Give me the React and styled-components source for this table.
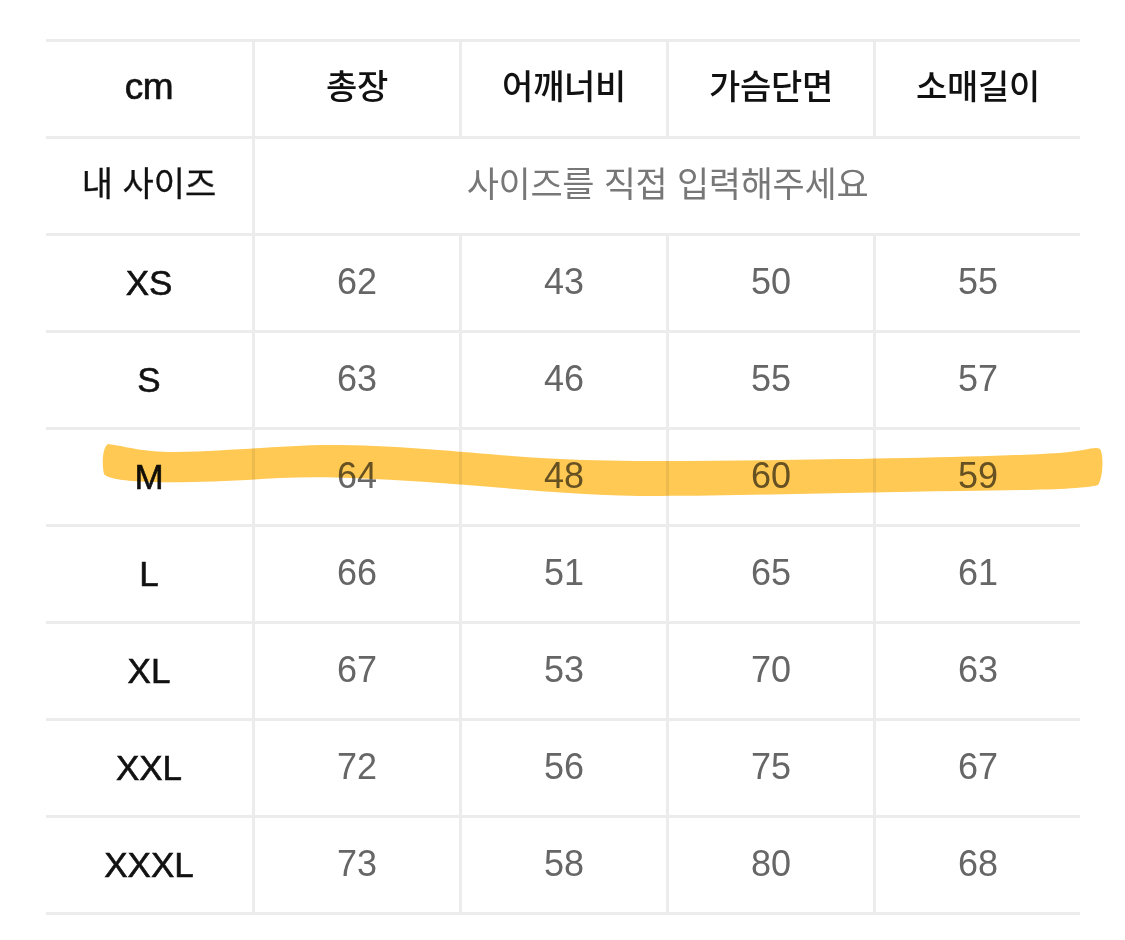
import React from "react";
import styled, { createGlobalStyle } from "styled-components";

const GlobalStyle = createGlobalStyle`
  html, body {
    margin: 0;
    padding: 0;
    background: #ffffff;
  }
  body {
    font-family: "Liberation Sans", "Noto Sans CJK KR", sans-serif;
  }
`;

const Page = styled.div`
  position: relative;
  width: 1125px;
  height: 940px;
  padding: 39px 0 0 46px;
  box-sizing: border-box;
  overflow: hidden;
`;

const Table = styled.div`
  display: grid;
  grid-template-columns: 206px repeat(4, 207px);
  width: 1034px;
  border-top: 3px solid #ececec;
`;

const Cell = styled.div`
  height: 94px;
  display: flex;
  align-items: center;
  justify-content: center;
  border-bottom: 3px solid #ececec;
  border-left: ${(p) => (p.$first ? "none" : "3px solid #ececec")};
  grid-column: ${(p) => p.$span || "auto"};
  font-family: "Liberation Sans", "Noto Sans CJK KR", sans-serif;
`;

const HeadText = styled.span`
  font-size: ${(p) => (p.$latin ? "37px" : "34px")};
  font-weight: ${(p) => (p.$latin ? 400 : 500)};
  -webkit-text-stroke: ${(p) => (p.$latin ? "0.7px #111" : "0")};
  color: #111;
  letter-spacing: -0.3px;
  margin-bottom: ${(p) => (p.$latin ? "4px" : "10px")};
`;

const LabelText = styled.span`
  font-size: ${(p) => (p.$korean ? "34px" : "35px")};
  color: #111;
  font-weight: 400;
  -webkit-text-stroke: ${(p) => (p.$korean ? "0.3px #111" : "0.6px #111")};
  margin-bottom: ${(p) => (p.$korean ? "10px" : "0")};
`;

const ValueText = styled.span`
  font-size: 36px;
  color: #666;
  margin-bottom: 2px;
`;

const Placeholder = styled.span`
  font-size: 35px;
  color: #777;
  letter-spacing: -0.3px;
  margin-bottom: 10px;
`;

const Highlight = styled.svg`
  position: absolute;
  left: 0;
  top: 0;
  pointer-events: none;
  mix-blend-mode: multiply;
`;

const headers = ["총장", "어깨너비", "가슴단면", "소매길이"];

const rows = [
  ["XS", 62, 43, 50, 55],
  ["S", 63, 46, 55, 57],
  ["M", 64, 48, 60, 59],
  ["L", 66, 51, 65, 61],
  ["XL", 67, 53, 70, 63],
  ["XXL", 72, 56, 75, 67],
  ["XXXL", 73, 58, 80, 68],
];

const MarkerStroke = () => (
  <Highlight width="1125" height="940" viewBox="0 0 1125 940">
    <path
      d="M 108 444
         C 125 446, 140 452, 175 452
         C 240 451, 290 444, 340 445
         C 420 446, 480 455, 560 459
         C 620 462, 700 461, 780 460
         C 880 459, 990 457, 1060 453
         C 1085 451, 1095 446, 1100 449
         C 1104 455, 1103 478, 1098 485
         C 1080 490, 1020 490, 960 491
         C 860 492, 740 496, 660 496
         C 580 496, 510 488, 440 483
         C 380 479, 330 476, 280 478
         C 230 481, 190 483, 150 482
         C 125 481, 108 479, 104 474
         C 102 465, 102 448, 108 444 Z"
      fill="#ffc23c"
      opacity="0.88"
      style={{ filter: "blur(0.7px)" }}
    />
  </Highlight>
);

export default function App() {
  return (
    <>
      <GlobalStyle />
      <Page>
        <Table>
          <Cell $first>
            <HeadText $latin>cm</HeadText>
          </Cell>
          {headers.map((h) => (
            <Cell key={h}>
              <HeadText>{h}</HeadText>
            </Cell>
          ))}

          <Cell $first>
            <LabelText $korean>내 사이즈</LabelText>
          </Cell>
          <Cell $span="2 / span 4">
            <Placeholder>사이즈를 직접 입력해주세요</Placeholder>
          </Cell>

          {rows.map(([size, ...vals]) => (
            <React.Fragment key={size}>
              <Cell $first>
                <LabelText>{size}</LabelText>
              </Cell>
              {vals.map((v, i) => (
                <Cell key={i}>
                  <ValueText>{v}</ValueText>
                </Cell>
              ))}
            </React.Fragment>
          ))}
        </Table>
        <MarkerStroke />
      </Page>
    </>
  );
}
